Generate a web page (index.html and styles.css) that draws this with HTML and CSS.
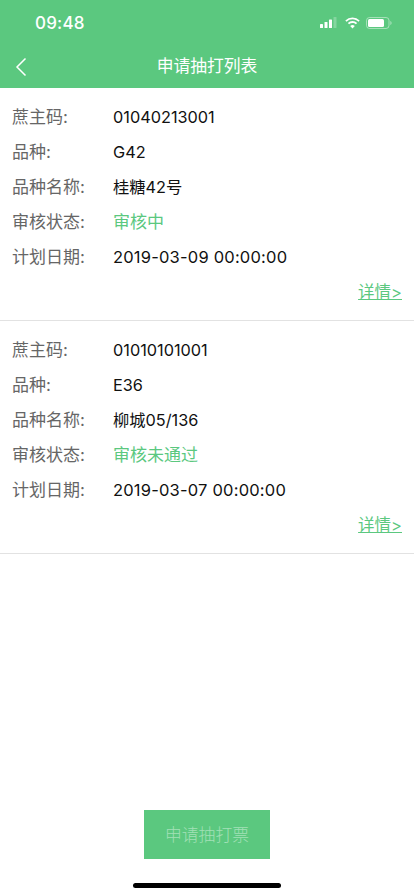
FILE: index.html
```html
<!DOCTYPE html>
<html lang="zh">
<head>
<meta charset="utf-8">
<title>申请抽打列表</title>
<link rel="stylesheet" href="styles.css">
</head>
<body>
<div class="phone">
  <header class="top">
    <div class="status">
      <span class="time">09:48</span>
      <div class="status-icons">
        <svg class="sig" width="18" height="11" viewBox="0 0 18 11"><rect x="0" y="7" width="3" height="4" rx=".6" fill="#fff"/><rect x="4.500" y="5" width="3" height="6" rx=".6" fill="#fff"/><rect x="9" y="2.500" width="3" height="8.500" rx=".6" fill="#fff"/><rect x="13.500" y="0" width="3" height="11" rx=".6" fill="#fff" opacity=".25"/></svg>
        <svg width="17" height="12" viewBox="0 0 17 12"><path d="M8.500 2.300c2.300 0 4.400.9 6 2.400l1.200-1.300A10.400 10.400 0 0 0 8.500.5 10.400 10.400 0 0 0 1.300 3.400l1.200 1.300a8.700 8.700 0 0 1 6-2.400z" fill="#fff"/><path d="M8.500 6c1.300 0 2.500.5 3.400 1.300l1.300-1.300A7 7 0 0 0 8.500 4.100 7 7 0 0 0 3.800 6l1.300 1.300A5 5 0 0 1 8.500 6z" fill="#fff"/><path d="M8.500 11.500l2.300-2.400a3.300 3.300 0 0 0-4.600 0z" fill="#fff"/></svg>
        <svg width="26" height="12" viewBox="0 0 26 12"><rect x=".5" y=".5" width="22.500" height="11" rx="3" fill="none" stroke="#fff" stroke-opacity=".45"/><rect x="2" y="2" width="16" height="8" rx="1.500" fill="#fff"/><path d="M24.300 4v4c.8-.3 1.300-1.100 1.300-2s-.5-1.700-1.300-2z" fill="#fff" opacity=".45"/></svg>
      </div>
    </div>
    <div class="nav">
      <svg class="back" width="12" height="20" viewBox="0 0 12 20"><path d="M10.500 1.500 2 10l8.500 8.500" fill="none" stroke="#fff" stroke-width="1.500"/></svg>
      <h1 class="title">申请抽打列表</h1>
    </div>
  </header>

  <main class="list">
    <section class="card">
      <div class="row"><span class="label">蔗主码:</span><span class="value">01040213001</span></div>
      <div class="row"><span class="label">品种:</span><span class="value">G42</span></div>
      <div class="row"><span class="label">品种名称:</span><span class="value">桂糖42号</span></div>
      <div class="row"><span class="label">审核状态:</span><span class="value green">审核中</span></div>
      <div class="row"><span class="label">计划日期:</span><span class="value date">2019-03-09 00:00:00</span></div>
      <div class="more"><a class="detail">详情&gt;</a></div>
    </section>
    <section class="card">
      <div class="row"><span class="label">蔗主码:</span><span class="value">01010101001</span></div>
      <div class="row"><span class="label">品种:</span><span class="value">E36</span></div>
      <div class="row"><span class="label">品种名称:</span><span class="value">柳城05/136</span></div>
      <div class="row"><span class="label">审核状态:</span><span class="value green">审核未通过</span></div>
      <div class="row"><span class="label">计划日期:</span><span class="value date">2019-03-07 00:00:00</span></div>
      <div class="more"><a class="detail">详情&gt;</a></div>
    </section>
  </main>

  <footer class="bottom">
    <button class="apply">申请抽打票</button>
    <div class="home"></div>
  </footer>
</div>
</body>
</html>
```
FILE: styles.css
```css
* { box-sizing: border-box; margin: 0; padding: 0; }
html, body { height: 100%; background: #fff; }
body { font-family: Inter, "Noto Sans CJK SC", sans-serif; overflow: hidden; }
.phone { width: 414px; height: 896px; display: flex; flex-direction: column; }
.top { background: #5bc87f; height: 88px; color: #fff; flex: none; }
.status { height: 44px; display: flex; justify-content: space-between; align-items: center; padding: 1px 22px 0 35px; }
.time { font-size: 17px; font-weight: 500; letter-spacing: .2px; }
.status-icons { display: flex; align-items: center; gap: 5px; }
.sig { margin-right: 1px; }
.nav { height: 44px; display: flex; align-items: center; justify-content: center; position: relative; }
.back { position: absolute; left: 15px; top: 13px; }
.title { font-size: 16.800px; font-weight: 400; line-height: 44px; }
.list { flex: 1; }
.card { height: 233px; padding: 11px 12px 0; border-bottom: 1px solid #e2e2e2; }
.row { display: flex; height: 35px; align-items: center; font-size: 17px; line-height: 24px; }
.label { width: 101px; color: #666; }
.value { color: #111; font-size: 16.300px; }
.date { letter-spacing: .2px; font-size: 16.500px; }
.value.green { color: #5bc87f; font-size: 17px; }
.more { display: flex; justify-content: flex-end; height: 35px; align-items: center; line-height: 24px; }
.detail { color: #5bc87f; font-size: 16.500px; text-decoration: underline; }
.bottom { flex: none; height: 86px; display: flex; flex-direction: column; align-items: center; }
.apply { width: 126px; height: 49px; padding-bottom: 2px; background: #5bc87f; border: none; color: #a3e0b7; font-size: 16.800px; font-weight: 300; font-family: inherit; }
.home { width: 148px; height: 5px; border-radius: 3px; background: #000; margin-top: 24px; }
```
